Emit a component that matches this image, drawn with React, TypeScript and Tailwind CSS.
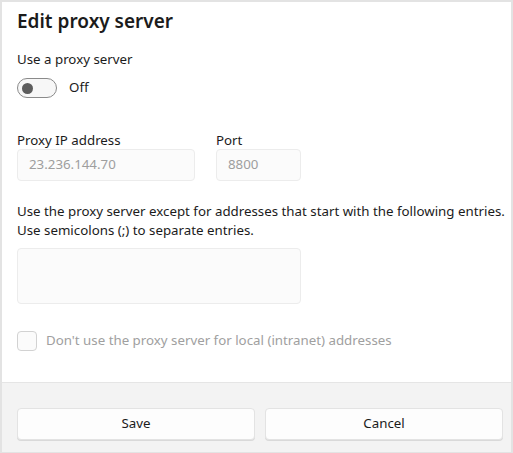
export default function App() {
  return (
    <div className="w-[513px] h-[453px] bg-white font-['Noto_Sans',sans-serif] text-[#1b1b1b]">
      <div className="flex h-full flex-col border-2 border-[#e3e3e3] border-b-[1px]">
        {/* Body */}
        <div className="flex-1 px-[15px] pt-[5px]">
          <h1 className="text-[19px] font-semibold leading-[28px]">Edit proxy server</h1>

          <div className="mt-[14px] text-[13.3px] leading-[20px]">Use a proxy server</div>
          <div className="mt-[9px] flex items-center gap-[12px]">
            <div className="flex h-[20px] w-[40px] items-center rounded-full border border-[#8a8a8a] bg-[#f7f7f7] px-[4px]">
              <div className="h-[11px] w-[11px] rounded-full bg-[#5d5d5d]" />
            </div>
            <span className="text-[13.3px]">Off</span>
          </div>

          <div className="mt-[33px] flex gap-[21px]">
            <div className="flex flex-col">
              <label className="text-[13.3px] leading-[18px]">Proxy IP address</label>
              <div className="flex h-[32px] w-[178px] items-center rounded-[4px] border border-[#ececec] bg-[#fbfbfb] px-[11px] text-[13.3px] text-[#9e9e9e]">
                23.236.144.70
              </div>
            </div>
            <div className="flex flex-col">
              <label className="text-[13.3px] leading-[18px]">Port</label>
              <div className="flex h-[32px] w-[85px] items-center rounded-[4px] border border-[#ececec] bg-[#fbfbfb] px-[11px] text-[13.3px] text-[#9e9e9e]">
                8800
              </div>
            </div>
          </div>

          <p className="mt-[21px] whitespace-nowrap text-[13.3px] leading-[19px]">
            Use the proxy server except for addresses that start with the following entries.
            <br />
            Use semicolons (;) to separate entries.
          </p>
          <div className="mt-[8px] h-[56px] w-[284px] rounded-[4px] border border-[#ececec] bg-[#fbfbfb]" />

          <div className="mt-[27px] flex items-center gap-[9px]">
            <div className="h-[20px] w-[20px] rounded-[4px] border border-[#d2d2d2] bg-[#fbfbfb]" />
            <span className="text-[13.3px] text-[#a0a0a0]">Don't use the proxy server for local (intranet) addresses</span>
          </div>
        </div>

        {/* Footer */}
        <div className="flex h-[70px] items-end gap-[10px] border-t border-[#e5e5e5] bg-[#f3f3f3] pl-[15px] pr-[8px] pb-[12px]">
          <button className="h-[32px] flex-1 rounded-[4px] border border-[#e3e3e3] bg-[#fdfdfd] text-[13.3px] shadow-[0_1px_0_#d9d9d9]">
            Save
          </button>
          <button className="h-[32px] flex-1 rounded-[4px] border border-[#e3e3e3] bg-[#fdfdfd] text-[13.3px] shadow-[0_1px_0_#d9d9d9]">
            Cancel
          </button>
        </div>
      </div>
    </div>
  )
}
